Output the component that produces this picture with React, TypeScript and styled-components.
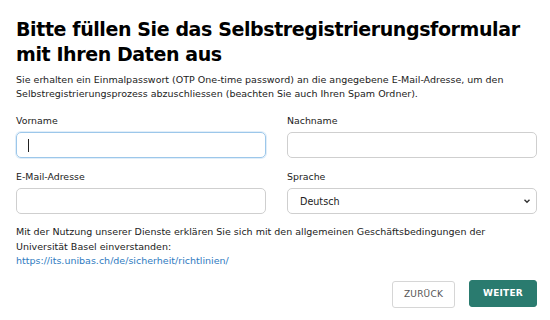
import styled, { createGlobalStyle } from "styled-components";

const GlobalStyles = createGlobalStyle`
  * { box-sizing: border-box; margin: 0; padding: 0; }
  body {
    background: #fff;
    color: #222;
    font-family: "DejaVu Sans", Verdana, sans-serif;
  }
`;

const Page = styled.div`
  width: 550px;
  padding: 17px 13px 0 16px;
`;

const Title = styled.h1`
  font-size: 19px;
  line-height: 25px;
  font-weight: 700;
  letter-spacing: -0.4px;
  color: #000;
  white-space: nowrap;
`;

const Intro = styled.p`
  margin-top: 6px;
  font-size: 9.5px;
  line-height: 14px;
  color: #222;
`;

const Grid = styled.div`
  margin-top: 13px;
  display: grid;
  grid-template-columns: 1fr 1fr;
  column-gap: 21px;
  row-gap: 12px;
`;

const Field = styled.div`
  display: flex;
  flex-direction: column;
`;

const Label = styled.label`
  font-size: 9.4px;
  line-height: 14px;
  color: #222;
  margin-bottom: 4px;
`;

const Input = styled.div<{ $focused?: boolean }>`
  height: 26px;
  border: 1px solid ${(p) => (p.$focused ? "#9cc7ea" : "#cfcfcf")};
  border-radius: 5px;
  display: flex;
  align-items: center;
  padding: 0 11px;
  ${(p) => p.$focused && "box-shadow: 0 0 0 1px rgba(156,199,234,0.3);"}
`;

const Caret = styled.span`
  width: 1px;
  height: 13px;
  background: #222;
`;

const Select = styled.div`
  height: 26px;
  border: 1px solid #cfcfcf;
  border-radius: 5px;
  display: flex;
  align-items: center;
  justify-content: space-between;
  padding: 0 4px 0 12px;
  font-size: 9.6px;
  color: #222;
`;

const Terms = styled.p`
  margin-top: 11px;
  font-size: 9.5px;
  line-height: 14.5px;
  color: #222;
`;

const Link = styled.a`
  color: #2f7bbf;
  text-decoration: none;
`;

const Actions = styled.div`
  margin-top: 12px;
  display: flex;
  justify-content: flex-end;
  align-items: flex-start;
  gap: 14px;
`;

const Button = styled.button<{ $primary?: boolean }>`
  font-family: "DejaVu Sans", Verdana, sans-serif;
  font-size: 9px;
  font-weight: ${(p) => (p.$primary ? 700 : 400)};
  letter-spacing: 0.2px;
  height: 27px;
  width: ${(p) => (p.$primary ? "68px" : "63px")};
  border-radius: 3px;
  border: 1px solid ${(p) => (p.$primary ? "#2a7b6f" : "#d6d6d6")};
  background: ${(p) => (p.$primary ? "#2a7b6f" : "#fff")};
  color: ${(p) => (p.$primary ? "#fff" : "#555")};
  margin-top: ${(p) => (p.$primary ? "-1px" : "0")};
`;

export default function App() {
  return (
    <Page>
      <GlobalStyles />
      <Title>
        Bitte füllen Sie das Selbstregistrierungsformular
        <br />
        mit Ihren Daten aus
      </Title>
      <Intro>
        Sie erhalten ein Einmalpasswort (OTP One-time password) an die angegebene E-Mail-Adresse, um den
        <br />
        Selbstregistrierungsprozess abzuschliessen (beachten Sie auch Ihren Spam Ordner).
      </Intro>
      <Grid>
        <Field>
          <Label>Vorname</Label>
          <Input $focused>
            <Caret />
          </Input>
        </Field>
        <Field>
          <Label>Nachname</Label>
          <Input />
        </Field>
        <Field>
          <Label>E-Mail-Adresse</Label>
          <Input />
        </Field>
        <Field>
          <Label>Sprache</Label>
          <Select>
            <span>Deutsch</span>
            <svg width="10" height="10" viewBox="0 0 10 10">
              <path d="M2.5 3.8 L5 6.3 L7.5 3.8" fill="none" stroke="#333" strokeWidth="1.4" />
            </svg>
          </Select>
        </Field>
      </Grid>
      <Terms>
        Mit der Nutzung unserer Dienste erklären Sie sich mit den allgemeinen Geschäftsbedingungen der
        <br />
        Universität Basel einverstanden:
        <br />
        <Link href="#">https://its.unibas.ch/de/sicherheit/richtlinien/</Link>
      </Terms>
      <Actions>
        <Button>ZURÜCK</Button>
        <Button $primary>WEITER</Button>
      </Actions>
    </Page>
  );
}
